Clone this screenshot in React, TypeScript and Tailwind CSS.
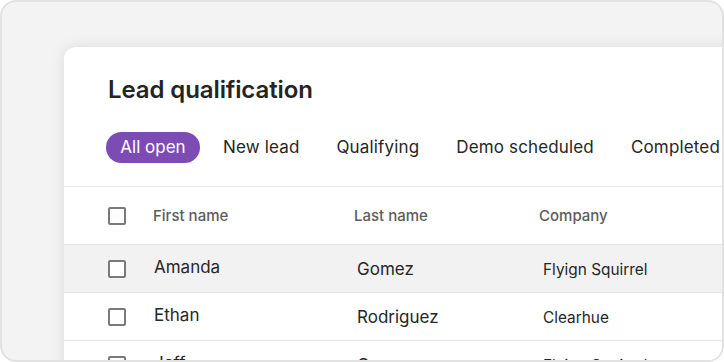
import React from "react";

const font = { fontFamily: "Inter, 'Noto Sans', sans-serif" };

function Box() {
  return <div className="w-[18px] h-[18px] rounded-[2px] border-2 border-[#7a7a7a] bg-white" />;
}

const rows = [
  { first: "Amanda", last: "Gomez", company: "Flyign Squirrel", hl: true },
  { first: "Ethan", last: "Rodriguez", company: "Clearhue", hl: false },
  { first: "Jeff", last: "Gomez", company: "Flyign Squirrel", hl: false },
];

export default function App() {
  const tabs = ["New lead", "Qualifying", "Demo scheduled", "Completed"];
  return (
    <div style={font} className="w-[724px] h-[362px] bg-[#f3f3f3] border-2 border-[#e2e2e2] rounded-[16px] overflow-hidden pl-[62px] pt-[45px]">
      <div className="w-[700px] h-[400px] bg-white rounded-tl-[12px] shadow-[0_0_14px_rgba(0,0,0,0.10)]">
        <div className="pl-[44px] pt-[27px] h-[139px]">
          <h1 className="text-[24px] leading-[32px] font-semibold text-[#242424] tracking-[-0.1px]">Lead qualification</h1>
          <div className="flex items-center gap-[9px] mt-[26px] -ml-[2px]">
            <div className="h-[31px] w-[94px] justify-center rounded-full bg-[#7c4cb4] text-white text-[17px] flex items-center">All open</div>
            {tabs.map((t) => (
              <div key={t} className="h-[31px] px-[14px] text-[17px] tracking-[0.15px] text-[#262626] flex items-center whitespace-nowrap">{t}</div>
            ))}
          </div>
        </div>
        <div className="border-t border-[#e8e8e8]">
          <div className="h-[58px] pl-[44px] grid grid-cols-[45px_201px_185px_1fr] items-center border-b border-[#e2e2e2] text-[15px] text-[#5c5c5c] font-medium">
            <Box />
            <div className="mt-[1px]">First name</div>
            <div className="mt-[1px]">Last name</div>
            <div className="mt-[1px]">Company</div>
          </div>
          {rows.map((r) => (
            <div key={r.first} className={`h-[48px] pl-[44px] grid grid-cols-[46px_203px_186px_1fr] items-center border-b border-[#e2e2e2] text-[#262626] ${r.hl ? "bg-[#f2f2f2]" : "bg-white"}`}>
              <Box />
              <div className="text-[17px] -mt-[2px]">{r.first}</div>
              <div className="text-[17px] mt-[2px]">{r.last}</div>
              <div className="text-[15.4px] mt-[2px]">{r.company}</div>
            </div>
          ))}
        </div>
      </div>
    </div>
  );
}
